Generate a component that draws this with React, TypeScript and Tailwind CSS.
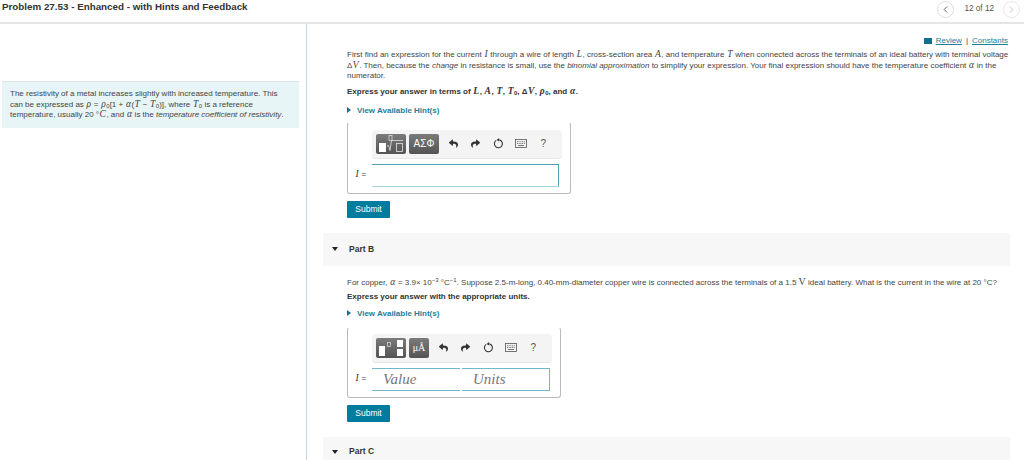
import React from "react";
import { FaReply, FaShare } from "react-icons/fa";
import { ChevronLeft, ChevronRight } from "lucide-react";

const V: React.FC<{ children: React.ReactNode }> = ({ children }) => (
  <i className="font-['Liberation_Serif',serif] text-[9.500px] leading-none mx-[0.500px]">{children}</i>
);

const Hint: React.FC = () => (
  <div className="flex items-center gap-[6px] text-[8px] leading-[11px] font-bold text-[#1a7f9c]">
    <span className="w-0 h-0 border-y-[3.5px] border-y-transparent border-l-[4px] border-l-[#14708c]" />
    <span>View Available Hint(s)</span>
  </div>
);

const Keyboard: React.FC = () => (
  <svg width="12" height="9" viewBox="0 0 12 9" fill="none" stroke="#555" strokeWidth="0.8">
    <rect x="0.5" y="0.5" width="11" height="8" fill="#f4f4f4" />
    <path d="M2 2.700h8M2 4.500h8" strokeDasharray="1 0.7" />
    <path d="M3 6.500h6" />
  </svg>
);

const Reset: React.FC = () => (
  <svg width="11" height="11" viewBox="0 0 11 11" fill="none">
    <path d="M6.500 1.900A4 4 0 1 1 3.200 2.400" stroke="#333" strokeWidth="1.100" />
    <path d="M6.200 0l-2.600 2 2.600 1.600z" fill="#333" />
  </svg>
);

const Cell: React.FC<{ children: React.ReactNode }> = ({ children }) => (
  <div className="w-[22.500px] flex items-center justify-center">{children}</div>
);

const ToolIcons: React.FC = () => (
  <div className="flex items-center">
    <Cell><FaReply className="text-[#333] text-[9px]" /></Cell>
    <Cell><FaShare className="text-[#333] text-[9px]" /></Cell>
    <Cell><Reset /></Cell>
    <Cell><Keyboard /></Cell>
    <Cell><span className="text-[10px] text-[#555]">?</span></Cell>
  </div>
);

const TemplateIcon: React.FC = () => (
  <svg width="26" height="18" viewBox="0 0 26 18" fill="none">
    <rect x="1" y="8" width="7" height="9" fill="#fff" />
    <path d="M9 11l1.500-.5 1.500 5 1.500-10H25" stroke="#e4e4e4" strokeWidth="0.800" />
    <rect x="11" y="0.500" width="3" height="5" stroke="#e4e4e4" strokeWidth="0.700" />
    <rect x="18.500" y="8.500" width="6" height="8" stroke="#e4e4e4" strokeWidth="0.800" />
  </svg>
);

const FractionIcon: React.FC = () => (
  <svg width="26" height="18" viewBox="0 0 26 18" fill="none">
    <rect x="1" y="7" width="6" height="10" fill="#fff" />
    <rect x="9.500" y="3.500" width="3" height="4" stroke="#ddd" strokeWidth="0.700" />
    <rect x="19" y="1" width="6" height="7" fill="#fff" />
    <rect x="19" y="10" width="6" height="7" fill="#fff" />
  </svg>
);

const ToolButton: React.FC<{ children: React.ReactNode; w: string }> = ({ children, w }) => (
  <div className={`${w} h-[20px] rounded-[2px] bg-gradient-to-b from-[#7b7b7b] to-[#545454] flex items-center justify-center text-white text-[9px]`}>
    {children}
  </div>
);

const Submit: React.FC = () => (
  <div className="w-[43px] h-[17px] bg-[#007c9e] rounded-[1px] text-white text-[8.500px] flex items-center justify-center">
    Submit
  </div>
);

const PartHeader: React.FC<{ label: string; h: string }> = ({ label, h }) => (
  <div className={`${h} ml-[16px] mr-[14px] bg-[#f7f7f7] flex items-center pl-[9px]`}>
    <span className="w-0 h-0 border-x-[3px] border-x-transparent border-t-[4px] border-t-[#222]" />
    <span className="ml-[11px] text-[8.500px] font-bold text-[#333]">{label}</span>
  </div>
);

export default function App() {
  return (
    <div className="w-[1024px] h-[460px] overflow-hidden bg-white font-['Liberation_Sans',Arial,sans-serif] text-[#333] flex flex-col">
      <header className="h-[24px] shrink-0 border-b-2 border-[#e3e5e7] flex justify-between pl-[2px] pr-[4px] pt-px">
        <h1 className="text-[9.800px] leading-[12px] font-bold text-[#333]">Problem 27.53 - Enhanced - with Hints and Feedback</h1>
        <div className="flex items-start text-[8.200px] text-[#555]">
          <span className="w-[17px] h-[17px] rounded-full border border-[#ddd] flex items-center justify-center">
            <ChevronLeft size={11} className="text-[#555]" />
          </span>
          <span className="ml-[10px] mr-[9px] leading-[15px]">12 of 12</span>
          <span className="w-[17px] h-[17px] rounded-full border border-[#e8e8e8] flex items-center justify-center">
            <ChevronRight size={11} className="text-[#bbb]" />
          </span>
        </div>
      </header>

      <div className="flex flex-1 min-h-0">
        <aside className="w-[307px] shrink-0 border-r border-[#c6d5e2] pt-[57px] pl-[2px] pr-[7px]">
          <div className="bg-[#e8f5f7] border-t border-[#dbe5e8] h-[47px] pl-[8px] pt-[7px] text-[8px] leading-[10.500px] text-[#444]">
            <p className="whitespace-nowrap">The resistivity of a metal increases slightly with increased temperature. This</p>
            <p className="whitespace-nowrap">
              can be expressed as <V>ρ</V> = <V>ρ</V><sub className="text-[6px]">0</sub>[1 + <V>α</V>(<V>T</V> − <V>T</V><sub className="text-[6px]">0</sub>)], where <V>T</V><sub className="text-[6px]">0</sub> is a reference
            </p>
            <p className="whitespace-nowrap">
              temperature, usually 20 °<V>C</V>, and <V>α</V> is the <i>temperature coefficient of resistivity</i>.
            </p>
          </div>
        </aside>

        <main className="flex-1 min-w-0 flex flex-col">
          <div className="pl-[40px] pr-[16px]">
            <div className="flex justify-end items-center h-[11px] mt-[11px] text-[8px] text-[#1a7f9c]">
              <span className="w-[8px] h-[6px] bg-[#0f6f8c] mr-[4px]" />
              <span className="underline">Review</span>
              <span className="mx-[4px] text-[#333] no-underline">|</span>
              <span className="underline">Constants</span>
            </div>
            <div className="mt-[4px] text-[8px] leading-[10.500px] text-[#444] whitespace-nowrap">
              <p>First find an expression for the current <V>I</V> through a wire of length <V>L</V>, cross-section area <V>A</V>, and temperature <V>T</V> when connected across the terminals of an ideal battery with terminal voltage</p>
              <p>Δ<V>V</V>. Then, because the <i>change</i> in resistance is small, use the <i>binomial approximation</i> to simplify your expression. Your final expression should have the temperature coefficient <V>α</V> in the</p>
              <p>numerator.</p>
            </div>
            <p className="mt-[4px] text-[8px] leading-[11px] font-bold text-[#333]">
              Express your answer in terms of <V>L</V>, <V>A</V>, <V>T</V>, <V>T</V><sub className="text-[6px]">0</sub>, Δ<V>V</V>, <V>ρ</V><sub className="text-[6px]">0</sub>, and <V>α</V>.
            </p>
            <div className="mt-[8px]"><Hint /></div>

            <div className="mt-[6px] w-[224px] h-[72px] border-x border-b border-t border-t-transparent border-x-[#bbb] border-b-[#bbb] rounded-[3px] pt-[7px] pl-[24px]">
              <div className="w-[190px] h-[29px] bg-[#f4f4f4] rounded-[4px] border-b border-[#e6e6e6] flex items-center pl-[4px]">
                <ToolButton w="w-[30px]"><TemplateIcon /></ToolButton>
                <div className="w-[3px]" />
                <ToolButton w="w-[30px]"><span className="text-[10px]">ΑΣΦ</span></ToolButton>
                <div className="w-[3px]" />
                <ToolIcons />
              </div>
              <div className="flex items-center mt-[5px] -ml-[17px]">
                <span className="w-[17px] text-[8px]"><V>I</V> =</span>
                <div className="w-[187px] h-[23px] border-t border-r border-[#4f9fb5] border-b border-b-[#a9d5dc] bg-white" />
              </div>
            </div>
            <div className="mt-[7px]"><Submit /></div>
          </div>

          <div className="mt-[15px]"><PartHeader label="Part B" h="h-[33px]" /></div>

          <div className="pl-[40px] pr-[16px]">
            <p className="mt-[11px] text-[8px] leading-[11px] text-[#444] whitespace-nowrap">
              For copper, <V>α</V> = 3.9× 10<sup className="text-[6px]">−3</sup> °C<sup className="text-[6px]">−1</sup>. Suppose 2.5-m-long, 0.40-mm-diameter copper wire is connected across the terminals of a 1.5 <span className="font-['Liberation_Serif',serif] text-[10px] leading-none">V</span> ideal battery. What is the current in the wire at 20 °C?
            </p>
            <p className="mt-[3px] text-[8px] leading-[11px] font-bold text-[#333]">Express your answer with the appropriate units.</p>
            <div className="mt-[6px]"><Hint /></div>

            <div className="mt-[8px] w-[214px] h-[71px] border-x border-b border-t border-t-transparent border-x-[#bbb] border-b-[#bbb] rounded-[3px] pt-[6px] pl-[24px]">
              <div className="w-[180px] h-[29px] bg-[#f4f4f4] rounded-[4px] border-b border-[#e6e6e6] flex items-center pl-[4px]">
                <ToolButton w="w-[30px]"><FractionIcon /></ToolButton>
                <div className="w-[3px]" />
                <ToolButton w="w-[20px]"><span className="font-['Liberation_Serif',serif] text-[10px]">μÅ</span></ToolButton>
                <div className="w-[3px]" />
                <ToolIcons />
              </div>
              <div className="flex items-center mt-[5px] -ml-[17px]">
                <span className="w-[17px] text-[8px]"><V>I</V> =</span>
                <div className="w-[88px] h-[23px] border-y border-[#72b8cb] flex items-center pl-[11px] font-['Liberation_Serif',serif] italic text-[15px] text-[#777]">Value</div>
                <div className="w-[2px]" />
                <div className="w-[88px] h-[23px] border-y border-r border-[#72b8cb] flex items-center pl-[11px] font-['Liberation_Serif',serif] italic text-[15px] text-[#777]">Units</div>
              </div>
            </div>
            <div className="mt-[7px]"><Submit /></div>
          </div>

          <div className="mt-[15px]"><PartHeader label="Part C" h="h-[30px]" /></div>
        </main>
      </div>
    </div>
  );
}
